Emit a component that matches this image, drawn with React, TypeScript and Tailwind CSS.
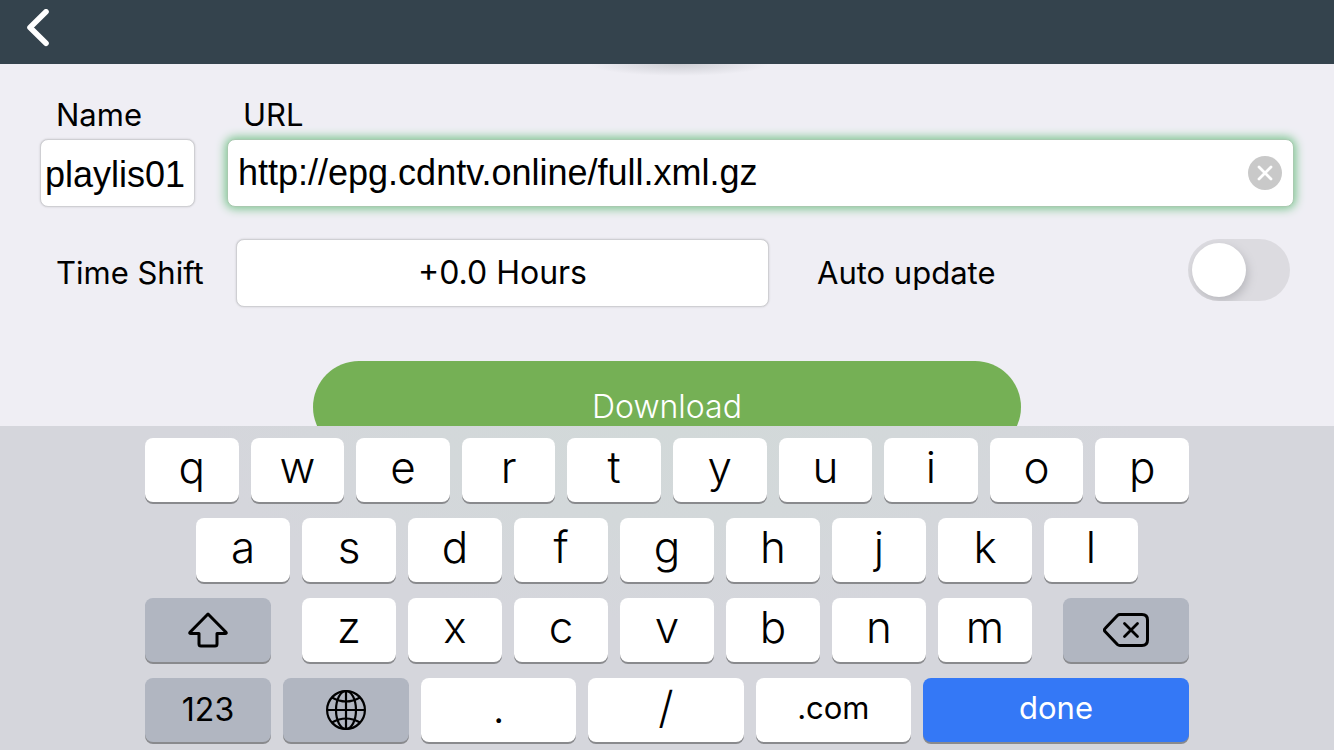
import { useState } from "react";
import type { ReactNode } from "react";

type KeyProps = {
  children: ReactNode;
  label?: string;
  className?: string;
  onPress?: () => void;
};

const keyBase =
  "flex h-16 items-center justify-center rounded-lg shadow-[0_2px_0_#898a8d]";
const letterKey = "min-w-0 flex-1 bg-white pb-1.5 text-[44px] leading-none font-[350]";
const darkKey = "w-[126px] shrink-0 bg-[#b1b6c1]";

function Key({ children, label, className = "", onPress }: KeyProps) {
  return (
    <button
      type="button"
      aria-label={label}
      onClick={onPress}
      className={`${keyBase} ${className}`}
    >
      {children}
    </button>
  );
}

function Letters({ letters, onType }: { letters: string; onType: (s: string) => void }) {
  return (
    <>
      {letters.split("").map((letter) => (
        <Key key={letter} className={letterKey} onPress={() => onType(letter)}>
          {letter}
        </Key>
      ))}
    </>
  );
}

function BackIcon() {
  return (
    <svg width="24" height="38" viewBox="0 0 24 38" fill="none" aria-hidden="true">
      <path
        d="M20 2.800 4 18.500l16 15.700"
        stroke="#fff"
        strokeWidth="5.600"
        strokeLinecap="round"
        strokeLinejoin="round"
      />
    </svg>
  );
}

function ClearIcon() {
  return (
    <svg width="34" height="34" viewBox="0 0 34 34" aria-hidden="true">
      <circle cx="17" cy="17" r="17" fill="#c9c9c9" />
      <path
        d="m11 11 12 12M23 11 11 23"
        stroke="#fff"
        strokeWidth="2.800"
        strokeLinecap="round"
      />
    </svg>
  );
}

function ShiftIcon() {
  return (
    <svg width="40" height="36" viewBox="0 0 40 36" fill="none" aria-hidden="true">
      <path
        d="M20 2 2 20.300q-.8 1.200.8 1.200H11V32q0 2 2 2h14q2 0 2-2V21.500h8.200q1.600 0 .8-1.200Z"
        stroke="#000"
        strokeWidth="3"
        strokeLinejoin="round"
      />
    </svg>
  );
}

function DeleteIcon() {
  return (
    <svg width="46" height="34" viewBox="0 0 46 34" fill="none" aria-hidden="true">
      <path
        d="M17 1.500h22q5.500 0 5.500 5.500v20q0 5.500-5.500 5.500H17q-1.500 0-2.600-1L2.300 18.800q-1.800-1.800 0-3.600L14.400 2.500q1.100-1 2.600-1Z"
        stroke="#000"
        strokeWidth="3"
        strokeLinejoin="round"
      />
      <path
        d="m21.500 10.500 13 13M34.500 10.500l-13 13"
        stroke="#000"
        strokeWidth="2.800"
        strokeLinecap="round"
      />
    </svg>
  );
}

function GlobeIcon() {
  return (
    <svg width="40" height="40" viewBox="0 0 40 40" fill="none" stroke="#000" strokeWidth="2.200" aria-hidden="true">
      <circle cx="20" cy="20" r="18.900" />
      <path d="M20 1v38M1 20h38" />
      <ellipse cx="20" cy="20" rx="10" ry="19" />
      <path d="M6 7.500q14 8 28 0M6 32.500q14-8 28 0" />
    </svg>
  );
}

export default function App() {
  const [name, setName] = useState("playlis01");
  const [url, setUrl] = useState("http://epg.cdntv.online/full.xml.gz");
  const [autoUpdate, setAutoUpdate] = useState(false);
  const type = (s: string) => setUrl((value) => value + s);

  return (
    <div className="flex h-screen flex-col bg-[#efeef4] font-['Inter','Liberation_Sans',sans-serif] text-black">
      <header className="relative h-16 shrink-0 bg-[#34434d] px-[26px] pt-[9px]">
        <button type="button" aria-label="Back" className="block">
          <BackIcon />
        </button>
        <div className="pointer-events-none absolute top-full left-1/2 h-3 w-[200px] -translate-x-1/2 bg-[radial-gradient(ellipse_90px_12px_at_56%_0%,#cdced3_0%,#dcdce2_45%,transparent_100%)]" />
      </header>

      <main className="min-h-0 flex-1 overflow-hidden">
        <form className="px-10 pt-8" onSubmit={(e) => e.preventDefault()}>
          <div className="flex gap-8">
            <div className="w-[155px] shrink-0">
              <label htmlFor="name" className="block pl-4 text-[31px] leading-[38px]">
                Name
              </label>
              <input
                id="name"
                type="text"
                value={name}
                onChange={(e) => setName(e.target.value)}
                className="mt-[5px] block h-[68px] w-full rounded-lg border border-[#cfcfd3] bg-white px-1 pt-1 font-['Liberation_Sans',sans-serif] text-[36px] shadow-[0_0_2px_#c4c4c8] outline-none"
              />
            </div>
            <div className="min-w-0 flex-1">
              <label htmlFor="url" className="block pl-4 text-[31px] leading-[38px]">
                URL
              </label>
              <div className="mt-[5px] flex h-[68px] items-center rounded-lg border border-[#a9c9b0] bg-white pr-[11px] pl-2.5 shadow-[0_0_10px_2px_#7cc58f]">
                <input
                  id="url"
                  type="text"
                  value={url}
                  onChange={(e) => setUrl(e.target.value)}
                  className="h-full min-w-0 flex-1 bg-transparent font-['Liberation_Sans',sans-serif] text-[36px] outline-none"
                />
                <button type="button" aria-label="Clear URL" onClick={() => setUrl("")}>
                  <ClearIcon />
                </button>
              </div>
            </div>
          </div>

          <div className="mt-8 flex items-center">
            <label htmlFor="shift" className="w-[196px] shrink-0 pl-4 text-[31px]">
              Time Shift
            </label>
            <button
              id="shift"
              type="button"
              className="h-[68px] min-w-0 flex-1 rounded-lg border border-[#cfcfd3] bg-white text-[32px] shadow-[0_0_2px_#c4c4c8]"
            >
              +0.0 Hours
            </button>
            <div className="ml-12 flex w-[477px] shrink-0 items-center justify-between pr-1">
              <label htmlFor="auto" className="text-[31px]">
                Auto update
              </label>
              <input
                id="auto"
                type="checkbox"
                role="switch"
                checked={autoUpdate}
                onChange={(e) => setAutoUpdate(e.target.checked)}
                className="mb-1.5 h-[62px] w-[102px] appearance-none overflow-hidden rounded-full bg-[#dcdbe0] p-1 before:block before:size-[54px] before:rounded-full before:bg-white before:shadow-[2px_4px_10px_#b8b8bd] checked:bg-[#74b054] checked:before:translate-x-10"
              />
            </div>
          </div>

          <button
            type="submit"
            className="mx-auto mt-[54px] block h-[92px] w-[708px] max-w-full rounded-full bg-[#75b055] text-[32px] font-[350] text-white"
          >
            Download
          </button>
        </form>
      </main>

      <section
        aria-label="Keyboard"
        className="flex shrink-0 flex-col gap-4 bg-[#d5d6dc] bg-[radial-gradient(ellipse_35%_60%_at_50%_0%,#d2d9d9_0%,#d3d8da_50%,transparent_100%)] px-[145px] pt-3 pb-2"
      >
        <div className="flex gap-3">
          <Letters letters="qwertyuiop" onType={type} />
        </div>
        <div className="flex gap-3 px-[51px]">
          <Letters letters="asdfghjkl" onType={type} />
        </div>
        <div className="flex gap-[31px]">
          <Key label="Shift" className={darkKey}>
            <ShiftIcon />
          </Key>
          <div className="flex min-w-0 flex-1 gap-3">
            <Letters letters="zxcvbnm" onType={type} />
          </div>
          <Key label="Delete" className={darkKey} onPress={() => setUrl((v) => v.slice(0, -1))}>
            <DeleteIcon />
          </Key>
        </div>
        <div className="flex gap-3">
          <Key className={`${darkKey} text-[32px]`}>123</Key>
          <Key label="Next keyboard" className={darkKey}>
            <GlobeIcon />
          </Key>
          <Key className={letterKey} onPress={() => type(".")}>
            .
          </Key>
          <Key className={letterKey} onPress={() => type("/")}>
            /
          </Key>
          <Key className="min-w-0 flex-1 bg-white pb-1 text-[31px]" onPress={() => type(".com")}>
            .com
          </Key>
          <Key className="w-[266px] shrink-0 bg-[#3478f6] pb-1 text-[31px] text-white">done</Key>
        </div>
      </section>
    </div>
  );
}
